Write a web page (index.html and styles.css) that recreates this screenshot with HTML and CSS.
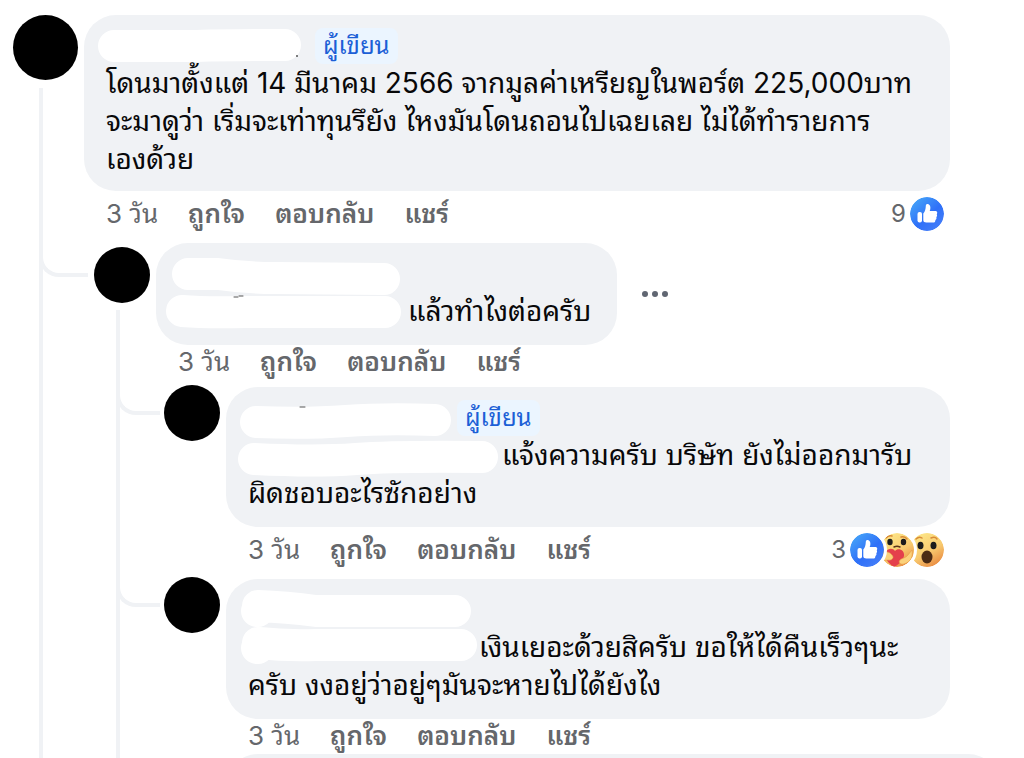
FILE: index.html
```html
<!DOCTYPE html>
<html lang="th">
<head>
    <meta charset="UTF-8">
    <meta name="viewport" content="width=device-width, initial-scale=1.0">
    <title>ความคิดเห็น</title>
    <link rel="stylesheet" href="styles.css">
</head>
<body>

<!-- Shared reaction icons -->
<svg class="defs" width="0" height="0" aria-hidden="true">
    <defs>
        <linearGradient id="blue" x1="0.1" y1="0.1" x2="0.8" y2="0.9">
            <stop offset="0" stop-color="#45a3f8"/>
            <stop offset="0.6" stop-color="#2f70f8"/>
            <stop offset="1" stop-color="#427cf8"/>
        </linearGradient>
        <linearGradient id="yellow" x1="0.2" y1="0" x2="0.8" y2="1">
            <stop offset="0" stop-color="#fde88a"/>
            <stop offset="0.55" stop-color="#f8cb70"/>
            <stop offset="1" stop-color="#e8843c"/>
        </linearGradient>
        <clipPath id="face"><circle cx="17" cy="17" r="17"/></clipPath>
        <symbol id="like" viewBox="0 0 34 34">
            <circle cx="17" cy="17" r="17" fill="url(#blue)"/>
            <rect x="7.500" y="15" width="4.500" height="10.500" rx="2" fill="#fff"/>
            <path d="M13.300 16.500c1.800-2 2.300-4 2.500-7.500 0-3 4.600-2.500 4.600 1.700 0 1.200-.3 2.300-.7 3.300h5.300c2.500 0 2.700 2.300 1.700 3.300.7 1 .4 2.300-.4 2.900.5 1.100.1 2.200-.9 2.700.2 1.700-.8 2.600-2.300 2.600h-6.900c-1.600 0-2.900-.6-2.900-2.200z" fill="#fff"/>
        </symbol>
        <symbol id="care" viewBox="0 0 34 34">
            <g clip-path="url(#face)">
                <circle cx="17" cy="17" r="17" fill="url(#yellow)"/>
                <path d="M6 5q3-3 6-2M21 4q4-1 6 2" fill="none" stroke="#d88a38" stroke-width="1.500" stroke-linecap="round"/>
                <ellipse cx="10" cy="9" rx="2.700" ry="3.200" fill="#1c1c1c"/>
                <ellipse cx="23.500" cy="9" rx="2.700" ry="3.200" fill="#1c1c1c"/>
                <path d="M14 14q3-1.500 6 0" fill="none" stroke="#59351b" stroke-width="1.500" stroke-linecap="round"/>
                <path d="M14 34C6 29 4 23 6 19c2-4 7-4 9-1 3-4 10-1 9 5-1 5-6 9-10 11z" fill="#e4404c"/>
                <path d="M1 20c3-2 8-2 11 2 3 3-1 6-4 5l-6 1zM32 17c1 7-1 12-8 14-4 1-6-2-4-4s6-2 8-5z" fill="#fbd17b" stroke="#e59a48" stroke-width="0.600"/>
            </g>
        </symbol>
        <symbol id="wow" viewBox="0 0 34 34">
            <circle cx="17" cy="17" r="17" fill="url(#yellow)"/>
            <path d="M6 6q3-3 6-1M21 5q4-2 6 1" fill="none" stroke="#d88a38" stroke-width="1.500" stroke-linecap="round"/>
            <ellipse cx="10.500" cy="12.500" rx="3" ry="3.800" fill="#1c1c1c"/>
            <ellipse cx="23.500" cy="12.500" rx="3" ry="3.800" fill="#1c1c1c"/>
            <ellipse cx="17" cy="24" rx="5.500" ry="6.500" fill="#4b2b14"/>
        </symbol>
    </defs>
</svg>

<main class="thread">
    <article class="comment root">
        <div class="avatar"></div>
        <div class="body">
            <div class="bubble">
                <svg class="cover" width="230" height="60" aria-hidden="true">
                    <path d="M30 31L112 31Q150 30 201 30"/>
                    <circle cx="213" cy="41" r="1"/>
                </svg>
                <div class="name"><span class="gap name-gap"></span><span class="badge">ผู้เขียน</span></div>
                <p>โดนมาตั้งแต่ 14 มีนาคม 2566 จากมูลค่าเหรียญในพอร์ต 225,000บาท<br>จะมาดูว่า เริ่มจะเท่าทุนรึยัง ไหงมันโดนถอนไปเฉยเลย ไม่ได้ทำรายการ<br>เองด้วย</p>
            </div>
            <div class="actions with-reactions">
                <time>3 วัน</time>
                <button>ถูกใจ</button>
                <button>ตอบกลับ</button>
                <button>แชร์</button>
                <div class="reactions"><span>9</span><svg><use href="#like"/></svg></div>
            </div>
        </div>
    </article>

    <div class="replies">
        <article class="comment reply first">
            <div class="avatar"></div>
            <div class="body">
                <div class="row">
                    <div class="bubble">
                        <svg class="cover" width="250" height="100" aria-hidden="true">
                            <path d="M32 31L62 31Q90 35 120 35L228 36"/>
                            <path d="M26 68Q50 70 90 69L229 69"/>
                            <path class="mark" d="M78 54h4M83 53h4"/>
                        </svg>
                        <div class="name"></div>
                        <p><span class="gap mention-gap-first"></span>แล้วทำไงต่อครับ</p>
                    </div>
                    <button class="more" aria-label="เพิ่มเติม"><i></i><i></i><i></i></button>
                </div>
                <div class="actions">
                    <time>3 วัน</time>
                    <button>ถูกใจ</button>
                    <button>ตอบกลับ</button>
                    <button>แชร์</button>
                </div>
            </div>
        </article>

        <div class="replies nested">
            <article class="comment reply">
                <div class="avatar"></div>
                <div class="body">
                    <div class="bubble">
                        <svg class="cover" width="280" height="110" aria-hidden="true">
                            <path d="M30 35Q80 37 120 34T209 33"/>
                            <path d="M28 72Q90 75 130 72T256 70"/>
                            <path class="mark" d="M74 20h5"/>
                        </svg>
                        <div class="name"><span class="gap name-gap"></span><span class="badge">ผู้เขียน</span></div>
                        <p><span class="gap mention-gap-author"></span>แจ้งความครับ บริษัท ยังไม่ออกมารับ<br>ผิดชอบอะไรซักอย่าง</p>
                    </div>
                    <div class="actions with-reactions">
                        <time>3 วัน</time>
                        <button>ถูกใจ</button>
                        <button>ตอบกลับ</button>
                        <button>แชร์</button>
                        <div class="reactions"><span>3</span><svg><use href="#like"/></svg><svg><use href="#care"/></svg><svg><use href="#wow"/></svg></div>
                    </div>
                </div>
            </article>

            <article class="comment reply">
                <div class="avatar"></div>
                <div class="body">
                    <div class="bubble">
                        <svg class="cover" width="270" height="100" aria-hidden="true">
                            <path d="M32 27Q60 28 90 32L229 32M31 32h1"/>
                            <path d="M32 64Q60 67 90 66L235 66M31 69h1"/>
                        </svg>
                        <div class="name"></div>
                        <p><span class="gap mention-gap-last"></span>เงินเยอะด้วยสิครับ ขอให้ได้คืนเร็วๆนะ<br>ครับ งงอยู่ว่าอยู่ๆมันจะหายไปได้ยังไง</p>
                    </div>
                    <div class="actions">
                        <time>3 วัน</time>
                        <button>ถูกใจ</button>
                        <button>ตอบกลับ</button>
                        <button>แชร์</button>
                    </div>
                </div>
            </article>

            <article class="comment reply wide">
                <div class="avatar"></div>
                <div class="body">
                    <div class="bubble"><div class="name"></div></div>
                </div>
            </article>
        </div>
    </div>
</main>

</body>
</html>
```
FILE: styles.css
```css
*,
*::before {
    margin: 0;
    padding: 0;
    box-sizing: border-box;
}

body {
    background: #fff;
    color: #080809;
    font-family: Inter, "Noto Sans Thai Looped", "Noto Sans Thai", "Noto Sans", sans-serif;
    font-size: 28px;
    line-height: 38px;
}

.defs {
    position: absolute;
}

.thread {
    position: relative;
    height: 100vh;
    overflow: hidden;
    padding: 15px 74px 0 13px;
}

/* vertical thread lines */
.thread::before,
.replies .replies::before {
    content: "";
    position: absolute;
    top: 88px;
    bottom: 0;
    left: 39px;
    width: 4px;
    background: #f0f2f5;
}

.replies {
    position: relative;
    padding-left: 81px;
}

.replies .nested {
    padding-left: 70px;
}

.replies .replies::before {
    top: -77px;
    left: 22px;
}

.comment {
    position: relative;
    display: flex;
    align-items: flex-start;
    gap: 6px;
}

.avatar {
    flex: none;
    width: 65px;
    height: 65px;
    border-radius: 50%;
    background: #000;
}

.reply .avatar {
    width: 56px;
    height: 56px;
    margin-top: -2px;
}

.reply.first .avatar,
.reply.wide .avatar {
    margin-top: 4px;
}

/* curved branch to each reply */
.reply::before {
    content: "";
    position: absolute;
    top: 4px;
    left: -48px;
    width: 44px;
    height: 24px;
    border: solid #f0f2f5;
    border-width: 0 0 4px 4px;
    border-bottom-left-radius: 20px;
}

.reply.first::before {
    top: 10px;
    left: -55px;
    width: 49px;
}

.reply.wide::before {
    display: none;
}

.body {
    flex: 1;
    min-width: 0;
}

.bubble {
    position: relative;
    padding: 12px 26px 13px 22px;
    border-radius: 32px;
    background: #f0f2f5;
    white-space: nowrap;
}

.nested .bubble,
.first .bubble {
    padding-bottom: 15px;
}

.wide {
    margin-right: -50px;
}

.row {
    display: flex;
    align-items: center;
    gap: 22px;
}

.name {
    display: flex;
    align-items: center;
    height: 37px;
}

.badge {
    height: 36px;
    padding: 0 8px;
    border-radius: 8px;
    background: #ebf5ff;
    color: #1c5fd6;
    font-size: 24px;
    line-height: 36px;
}

/* room kept for the hidden names */
.gap {
    display: inline-block;
}

.name-gap {
    width: 209px;
}

.mention-gap-first {
    width: 230px;
}

.mention-gap-author {
    width: 254px;
}

.mention-gap-last {
    width: 231px;
}

.cover {
    position: absolute;
    top: 0;
    left: 0;
    fill: none;
    stroke: #fff;
    stroke-width: 32px;
    stroke-linecap: round;
    stroke-linejoin: round;
}

.cover circle {
    fill: #555;
    stroke: none;
}

.cover .mark {
    stroke: #555;
    stroke-width: 1px;
}

.more {
    display: flex;
    gap: 4px;
    padding: 8px 3px;
    border: none;
    background: none;
}

.more i {
    width: 6px;
    height: 6px;
    border-radius: 50%;
    background: #606672;
}

.actions {
    display: flex;
    align-items: center;
    gap: 30px;
    height: 34px;
    margin-bottom: 1px;
    padding: 0 6px 0 22px;
    color: #65676b;
    font-size: 26px;
    white-space: nowrap;
}

.reply.first {
    margin-bottom: 7px;
}

.actions.with-reactions {
    margin: 6px 0 12px;
}

.actions button {
    border: none;
    background: none;
    color: inherit;
    font: inherit;
    font-weight: 600;
    cursor: pointer;
}

.reactions {
    display: flex;
    align-items: center;
    margin-left: auto;
    font-size: 24px;
}

.reactions span {
    margin-right: 4px;
}

.reactions svg {
    position: relative;
    width: 34px;
    height: 34px;
    border-radius: 50%;
}

.reactions svg + svg {
    margin-left: -4px;
}

.reactions svg:nth-of-type(1) {
    z-index: 3;
    box-shadow: 0 0 0 3px #fff;
}

.reactions svg:nth-of-type(2) {
    z-index: 2;
    box-shadow: 0 0 0 3px #fff;
}
```
